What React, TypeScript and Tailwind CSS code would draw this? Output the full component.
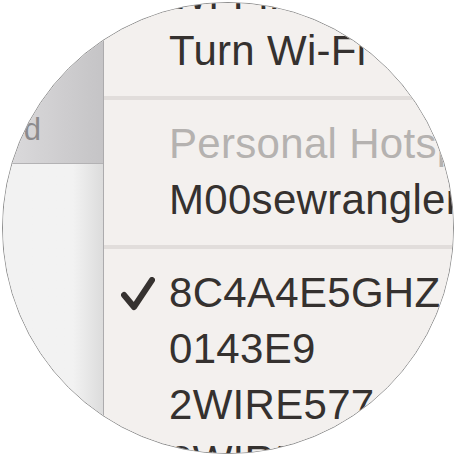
// Vergrote uitsnede van het Wi-Fi-menu in de menubalk, als ronde "loep".

const font = { fontFamily: '"Liberation Sans", Arial, sans-serif' }

function Check() {
  return (
    <svg width="34" height="34" viewBox="0 0 34 34" className="block">
      <path
        d="M3 18 L13 30 L31 3"
        fill="none"
        stroke="#363230"
        strokeWidth="6"
        strokeLinecap="round"
        strokeLinejoin="round"
      />
    </svg>
  )
}

function Item({ label, muted = false, checked = false }: { label: string; muted?: boolean; checked?: boolean }) {
  return (
    <div className="flex h-[56px] items-center whitespace-nowrap">
      <div className="flex w-[65px] shrink-0 justify-end pr-[14px] pt-[2px]">{checked && <Check />}</div>
      <span
        className={`text-[42px] leading-[56px] tracking-[0.3px] ${muted ? 'text-[#b5b2b0]' : 'text-[#35312f]'}`}
      >
        {label}
      </span>
    </div>
  )
}

function Separator() {
  return (
    <div className="pb-[16px] pt-[17px]">
      <div className="h-[4px] bg-[#e1dddb]" />
    </div>
  )
}

export default function App() {
  return (
    <div className="h-[456px] w-[456px] bg-white p-[2px]" style={font}>
      <div className="flex h-[452px] w-[452px] overflow-hidden rounded-full border border-[#8e8e8e]">
        <div className="flex w-[101px] shrink-0 flex-col border-r border-[#acabad]">
          <div className="flex h-[161px] justify-end overflow-hidden border-b border-[#b3b2b4] bg-gradient-to-r from-[#dcdbdd] to-[#c5c4c6] pr-[62px] pt-[111px]">
            <span className="whitespace-nowrap text-[31px] leading-[31px] text-[#8b8a8c]">Advanced</span>
          </div>
          <div className="flex-1 bg-gradient-to-r from-[#f2f2f2] from-70% to-[#dcdcdc]" />
        </div>
        <div className="min-w-0 flex-1 bg-[#f3f0ee]">
          <div className="-mt-[36px]">
            <Item label="Wi-Fi: On" />
            <Item label="Turn Wi-Fi Off" />
            <Separator />
            <Item label="Personal Hotspot" muted />
            <Item label="M00sewrangler" />
            <Separator />
            <Item label="8C4A4E5GHZ" checked />
            <Item label="0143E9" />
            <Item label="2WIRE577" />
            <Item label="2WIRE612" />
          </div>
        </div>
      </div>
    </div>
  )
}
